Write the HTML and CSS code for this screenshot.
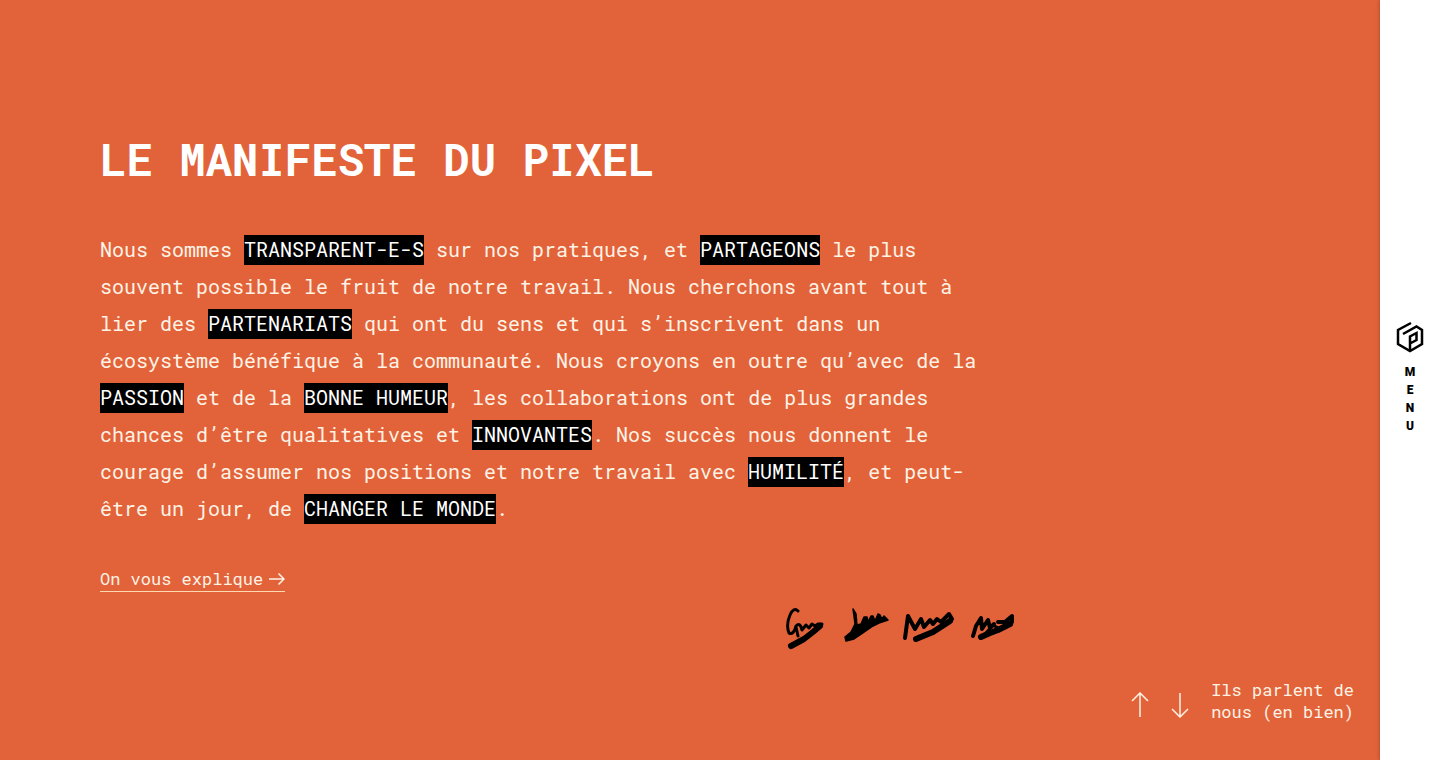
FILE: index.html
```html
<!DOCTYPE html>
<html lang="fr">
<head>
<meta charset="UTF-8" />
<meta name="viewport" content="width=device-width, initial-scale=1" />
<title>Le manifeste du pixel</title>
<link rel="stylesheet" href="styles.css">
</head>
<body>
  <main class="page">
    <section class="manifesto">
      <h1>LE MANIFESTE DU PIXEL</h1>
      <p class="manifesto-text">Nous sommes <mark>TRANSPARENT-E-S</mark> sur nos pratiques, et <mark>PARTAGEONS</mark> le plus souvent possible le fruit de notre travail. Nous cherchons avant tout à lier des <mark>PARTENARIATS</mark> qui ont du sens et qui s’inscrivent dans un écosystème bénéfique à la communauté. Nous croyons en outre qu’avec de la <mark>PASSION</mark> et de la <mark>BONNE HUMEUR</mark>, les collaborations ont de plus grandes chances d’être qualitatives et <mark>INNOVANTES</mark>. Nos succès nous donnent le courage d’assumer nos positions et notre travail avec <mark>HUMILITÉ</mark>, et peut-être un jour, de <mark>CHANGER LE MONDE</mark>.</p>
      <a class="more" href="#">On vous explique
        <svg width="16" height="14" viewBox="0 0 16 14" aria-hidden="true"><path d="M0 7h15M9.500 1.500l5.500 5.500-5.500 5.500" /></svg>
      </a>
      <svg class="signatures" width="232" height="44" viewBox="0 0 232 44" aria-hidden="true">
        <!-- first -->
        <path class="pen" d="M14 3C11 0 8 2 6 7C3 14 3 20 5 25C8 27 11 23 12 18C15 15 17 17 18 22L22 17L25 20L28 16L31 18L34 16L38 16M12 19L14 28" />
        <path class="brush" d="M7 38L20 31L29 24L36 18" />
        <!-- second -->
        <path class="blot" d="M69 1L72 6L73 17L77 16L80 9L83 9L84 14L87 8L89 8L91 13L94 6L96 7L98 11L100 8L104 12L95 15L89 18L76 27L70 31L62 33L61 29L67 24L71 16L70 8Z" />
        <!-- third -->
        <path class="thin" d="M121 30L124 8L131 21L137 11L140 19L146 12L149 16L153 11L157 14L165 6L168 11" />
        <path class="brush" d="M132 31L149 24L166 13" />
        <!-- fourth -->
        <path class="thin" d="M189 28L192 18L197 10L198 21L204 12L206 20L210 16M214 14L221 14L228 8L228 14" />
        <path class="brush" d="M197 29L206 25L214 22L226 16" />
        <path class="pen" d="M202 25L209 17L214 20" />
      </svg>
    </section>
    <nav class="pager" aria-label="Sections">
      <button type="button" aria-label="Section précédente">
        <svg width="18" height="26" viewBox="0 0 18 26" aria-hidden="true"><path d="M9 25V1M1 9l8-8 8 8" /></svg>
      </button>
      <button type="button" aria-label="Section suivante">
        <svg width="18" height="26" viewBox="0 0 18 26" aria-hidden="true"><path d="M9 1v24M1 17l8 8 8-8" /></svg>
      </button>
      <a href="#">Ils parlent de<br>nous (en bien)</a>
    </nav>
  </main>
  <aside class="sidebar">
    <button type="button" class="menu" aria-label="Menu">
      <svg width="28" height="32" viewBox="0 0 28 32" aria-hidden="true">
        <path d="M15 2L2 9V23L14 30L26 23V9L20.500 5.500L7 13" />
        <path d="M14 30V15.500L20.500 12V19L14 22.500" />
      </svg>
      <span>M</span><span>E</span><span>N</span><span>U</span>
    </button>
  </aside>
</body>
</html>
```

FILE: styles.css
```css
* {
  box-sizing: border-box;
}
body {
  margin: 0;
  min-height: 100vh;
  display: flex;
  font-family: 'Roboto Mono', 'DejaVu Sans Mono', monospace;
  background: #e2633a;
  color: #fff3e6;
}
.page {
  flex: 1;
  display: flex;
  flex-direction: column;
  justify-content: space-between;
  padding: 129px 26px 37px 100px;
}
.manifesto {
  max-width: 916px;
  display: flex;
  flex-direction: column;
  align-items: flex-start;
}
h1 {
  margin: 0 0 42px;
  font-size: 44px;
  line-height: 60px;
  font-weight: 700;
  color: #fff;
}
.manifesto-text {
  max-width: 900px;
  margin: 0 0 40px;
  font-size: 20px;
  line-height: 37px;
}
mark {
  padding: 1px 0 3px;
  background: #000;
  color: #fff;
}
a {
  color: inherit;
  font-size: 17px;
  text-decoration: none;
}
.more {
  display: flex;
  align-items: center;
  gap: 6px;
  line-height: 24px;
  border-bottom: 1px solid #ffd9b0;
}
svg {
  display: block;
  fill: none;
  stroke: currentColor;
  stroke-width: 1.5;
}
.signatures {
  align-self: flex-end;
  margin-top: 16px;
  color: #000;
  stroke-linecap: round;
  stroke-linejoin: round;
}
.pen {
  stroke-width: 3;
}
.thin {
  stroke-width: 4;
}
.brush {
  stroke-width: 6;
}
.blot {
  fill: #000;
}
button {
  padding: 0;
  border: 0;
  background: none;
  color: inherit;
  font: inherit;
  cursor: pointer;
}
.pager {
  display: flex;
  align-items: flex-end;
  justify-content: flex-end;
  gap: 22px;
}
.pager button {
  padding-bottom: 5px;
}
.pager a {
  line-height: 22px;
}
.sidebar {
  width: 60px;
  display: flex;
  align-items: center;
  justify-content: center;
  background: #fff;
  box-shadow: 0 0 4px rgba(0, 0, 0, 0.3);
}
.menu {
  display: flex;
  flex-direction: column;
  align-items: center;
  padding-bottom: 4px;
  color: #000;
  font-family: 'Liberation Sans Narrow', Roboto, sans-serif;
  font-size: 12px;
  line-height: 18px;
  font-weight: 900;
}
.menu svg {
  margin-bottom: 10px;
  stroke-width: 2.5;
}
```
